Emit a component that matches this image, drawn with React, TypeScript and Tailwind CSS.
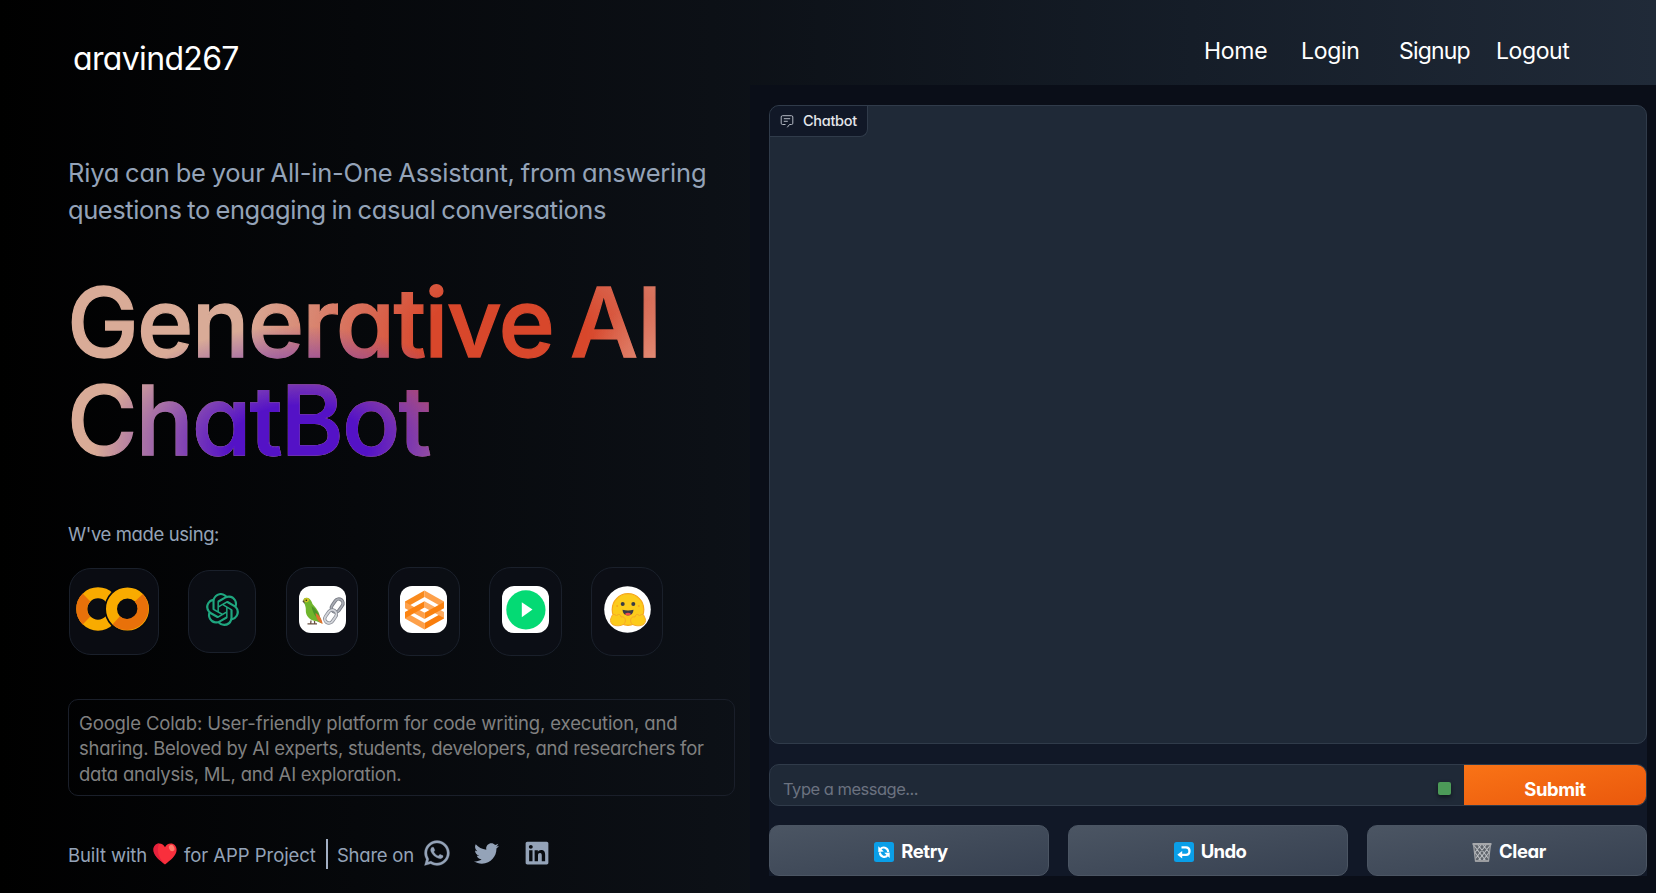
import type { ReactNode } from "react";
import { FaLinkedin, FaTwitter } from "react-icons/fa";
import { RiWhatsappLine } from "react-icons/ri";
import { SiOpenai } from "react-icons/si";

function ColabLogo() {
  return (
    <svg viewBox="0 0 73 44" className="mr-[3px] h-[44px] w-[73px]" fill="none">
      <circle cx="22" cy="22" r="16.2" stroke="#f9ab00" strokeWidth="11" />
      <path d="M10.500 10.500A16.200 16.200 0 0 0 10.500 33.500" stroke="#e8710a" strokeWidth="11" />
      <circle cx="51.5" cy="22" r="23.200" fill="#080a0f" />
      <circle cx="51.5" cy="22" r="16" stroke="#f9ab00" strokeWidth="11" />
      <path d="M62.8 10.7A16 16 0 0 1 40.2 33.3" stroke="#e8710a" strokeWidth="11" />
    </svg>
  );
}

function LangChainLogo() {
  return (
    <svg viewBox="0 0 47 47" className="h-[47px] w-[47px]">
      <rect width="47" height="47" rx="12" fill="#fff" />
      <path d="M4.500 15C4 12.500 6 11.500 8 11.800C11 12.200 12.500 15 13.500 18C17 22 20.500 26 21 31L23 37.500L17 35C11 34.500 6.500 30 6.800 24C7 21 6 19 4.500 15Z" fill="#6fb52c" />
      <path d="M4.200 15.500C4.500 12 8 10.800 10.500 13.500C9.500 16.500 7 17 4.200 15.500Z" fill="#c9c321" />
      <path d="M3.300 15L5.300 14.300L5.600 18Z" fill="#51453a" />
      <path d="M12.500 20C17 23 20.500 28 21.500 34C17 32 13.500 27 12.500 20Z" fill="#4c9428" />
      <path d="M16.500 27C20 29 22.500 32 23.800 38C20 36.500 17 33 16.500 27Z" fill="#e0702f" />
      <path d="M12 34.500L11.700 37.800M15.500 35L15.700 37.800M8.500 37.800H18" stroke="#6b5142" strokeWidth="1.300" fill="none" />
      <circle cx="7.300" cy="14.300" r=".8" fill="#222" />
      <g fill="none">
        <rect x="-4.200" y="-7" width="8.400" height="14" rx="4.200" transform="translate(38.200 19.500) rotate(35)" stroke="#777b84" strokeWidth="3.400" />
        <rect x="-4.200" y="-7" width="8.400" height="14" rx="4.200" transform="translate(38.200 19.500) rotate(35)" stroke="#a9acb4" strokeWidth="1.700" />
        <rect x="-4.200" y="-7" width="8.400" height="14" rx="4.200" transform="translate(31.600 30.500) rotate(35)" stroke="#858993" strokeWidth="3.400" />
        <rect x="-4.200" y="-7" width="8.400" height="14" rx="4.200" transform="translate(31.600 30.500) rotate(35)" stroke="#d3d5da" strokeWidth="1.900" />
      </g>
    </svg>
  );
}

function WeightedLayersLogo() {
  return (
    <svg viewBox="0 0 47 47" className="mr-px h-[47px] w-[47px]">
      <rect width="47" height="47" rx="12" fill="#fff" />
      <path d="M5 15.500L24.500 4.500V11L5 22Z" fill="#f98a1d" />
      <path d="M24.500 4.500L44 15.500V22L24.500 11Z" fill="#fda04a" />
      <path d="M5 26L24.500 37V43.500L5 32.500Z" fill="#fda04a" />
      <path d="M24.500 37L44 26V32.500L24.500 43.500Z" fill="#f97d0b" />
      <path d="M5 16L24.500 26.800V33L5 22.200Z" fill="#fda04a" />
      <path d="M24.500 15.200L44 26V32L24.500 21.400Z" fill="#fdab60" />
      <path d="M5 26L24.500 15.200V21.400L5 32.200Z" fill="#fb8312" />
      <path d="M24.500 26.800L44 16V22.200L24.500 33Z" fill="#f9810f" />
    </svg>
  );
}

function PlayLogo() {
  return (
    <svg viewBox="0 0 47 47" className="mr-px h-[47px] w-[47px]">
      <rect width="47" height="47" rx="12" fill="#fff" />
      <circle cx="23.900" cy="23.800" r="19.600" fill="#04da74" />
      <path d="M19.800 16.200L30.500 23.600L19.800 31.200Z" fill="#fff" />
    </svg>
  );
}

function HuggingFaceLogo() {
  return (
    <svg viewBox="0 0 47 47" className="h-[47px] w-[47px]">
      <circle cx="23.500" cy="23.500" r="23.300" fill="#fff" />
      <circle cx="24" cy="23.500" r="15.800" fill="#fccb1c" stroke="#f7a81b" strokeWidth="1.200" />
      <path d="M7.500 31C8.500 27 11.500 28.500 12.500 30C14 27.500 16.500 28 17 31C21 30 22.500 34 20.500 37.500C18 40.500 10 40.500 8 38C6 36 6 33 7.500 31Z" fill="#fccb1c" stroke="#f4a52a" strokeWidth=".9" />
      <path d="M40.500 31C39.500 27 36.500 28.500 35.500 30C34 27.500 31.500 28 31 31C27 30 25.500 34 27.500 37.500C30 40.500 38 40.500 40 38C42 36 42 33 40.500 31Z" fill="#fccb1c" stroke="#f4a52a" strokeWidth=".9" />
      <circle cx="18.700" cy="18" r="2" fill="#3a3b45" />
      <circle cx="29.300" cy="18" r="2" fill="#3a3b45" />
      <circle cx="13.200" cy="20" r="1" fill="#f7a81b" />
      <circle cx="34.800" cy="20" r="1" fill="#f7a81b" />
      <path d="M18.500 23.800Q24 25.300 29.500 23.800Q29.200 29.500 24 29.500Q18.800 29.500 18.500 23.800Z" fill="#3a3b45" />
      <path d="M20.800 28Q24 25.500 27.200 28Q26 29.500 24 29.500Q22 29.500 20.800 28Z" fill="#ef4e4e" />
    </svg>
  );
}

function Heart() {
  return (
    <svg viewBox="0 0 24 22" className="h-[22px] w-[24px]">
      <path d="M12 21.500C7 17.500.4 13 .4 6.800C.4 3 3 .5 6.200.5C8.800.5 11 2 12 4.300C13 2 15.200.5 17.800.5C21 .5 23.600 3 23.600 6.800C23.600 13 17 17.500 12 21.500Z" fill="#f92f3c" />
      <path d="M6.200.5C3 .5.4 3 .4 6.800C.4 13 7 17.500 12 21.500C6 15 3 9 6.200.5Z" fill="#d9183c" opacity=".6" />
      <ellipse cx="18.700" cy="5" rx="2.600" ry="3.400" fill="#ff7b6c" transform="rotate(-25 18.700 5)" />
    </svg>
  );
}

function RetryIcon() {
  return (
    <svg viewBox="0 0 20 20" className="h-5 w-5">
      <rect width="20" height="20" rx="2.500" fill="#0a9fe8" />
      <g fill="none" stroke="#fff" strokeWidth="2.100">
        <path d="M6.500 7C8.500 4.600 13.800 5 14.200 10" />
        <path d="M13.500 13.400C11.500 15.800 6.200 15.400 5.800 10.400" />
      </g>
      <path d="M4.300 4.300V10L9.800 9.600Z M15.700 16V10.400L10.200 10.800Z" fill="#fff" />
    </svg>
  );
}

function UndoIcon() {
  return (
    <svg viewBox="0 0 20 20" className="h-5 w-5">
      <rect width="20" height="20" rx="2.500" fill="#0a9fe8" />
      <path d="M7.500 5.300H12Q15.500 5.300 15.500 9Q15.500 12.800 12 12.800H7" fill="none" stroke="#fff" strokeWidth="2.300" />
      <path d="M3.300 12.800L8.200 9V16.600Z" fill="#fff" />
    </svg>
  );
}

function TrashIcon() {
  return (
    <svg viewBox="0 0 20 20" className="h-5 w-5">
      <path d="M1.500 2H18.500L16.500 19.500H3.500Z" fill="#5f646b" />
      <path d="M2 3.500L14 19M6 3L16.500 16.500M11 3L17.500 11M3 10.500L9.500 19M18 3.500L6 19M14 3L3.500 16.500M9 3L2.500 11M17 10.500L10.500 19" stroke="#b9bcc0" strokeWidth="1.100" fill="none" />
      <path d="M.5 1H19.500V3.200H.5Z" fill="#a6a8ab" />
      <path d="M3.300 18H16.700V20H3.300Z" fill="#9b9da1" />
      <path d="M1.500 2L3.500 19.500M18.500 2L16.500 19.500" stroke="#a6a8ab" strokeWidth="1.200" />
    </svg>
  );
}

function ChatIcon() {
  return (
    <svg viewBox="0 0 14 14" className="h-[14px] w-[14px]" fill="none" stroke="#b3b8c2" strokeWidth="1">
      <path d="M5.500 10.500H2.500Q1.200 10.500 1.200 9.200V3Q1.200 1.700 2.500 1.700H11.500Q12.800 1.700 12.800 3V9.200Q12.800 10.500 11.500 10.500H9.500L7.300 13.300" />
      <path d="M3.800 4.700H10.200M3.800 7.300H7.800" />
    </svg>
  );
}

function Tile({ size, children }: { size: string; children: ReactNode }) {
  return (
    <div className={`flex shrink-0 items-center justify-center rounded-[22px] border border-[#1a202b] bg-[#0c0f17]/80 pb-[5px] ${size}`}>
      {children}
    </div>
  );
}

function ActionButton({ icon, label }: { icon: ReactNode; label: ReactNode }) {
  return (
    <button className="flex h-[51px] flex-1 items-center justify-center gap-[7px] rounded-[10px] border border-[#4b5563] bg-linear-to-br from-[#4b5563] to-[#374151] pt-[2px] pl-[4px] text-[18.5px] font-bold text-white">
      {icon}
      {label}
    </button>
  );
}

export default function App() {
  return (
    <div className="flex h-[893px] w-[1656px] overflow-hidden bg-[linear-gradient(90deg,#000000_0%,#0c1016_43%,#151d28_72%,#202a38_100%)] font-['Inter',sans-serif] whitespace-nowrap [font-feature-settings:'cv11']">
      <main className="flex w-[750px] shrink-0 flex-col pl-[68px] text-[#94a3b8]">
        <div className="mt-[39px] pl-[5px] text-[32px] leading-10 tracking-[-0.66px] text-white">aravind267</div>

        <div className="mt-[75px] text-[25.5px] leading-[37px]">
          <div className="tracking-[-0.22px] [word-spacing:-1px]">Riya can be your All-in-One Assistant, from answering</div>
          <div className="tracking-[-0.43px] [word-spacing:-1px]">questions to engaging in casual conversations</div>
        </div>

        <h1 className="mt-[46px] -ml-px w-[600px] bg-[radial-gradient(ellipse_205px_120px_at_232px_172px,#5412c6_0%,#5412c6_34%,rgba(110,44,185,0.75)_60%,rgba(190,120,180,0)_100%),radial-gradient(circle_at_592px_98px,#e29c86_0px,rgba(226,140,118,0.8)_20px,rgba(216,100,80,0)_75px),radial-gradient(ellipse_265px_165px_at_440px_62px,#d8472b_0%,#d8472b_30%,rgba(216,90,68,0.8)_55%,rgba(216,130,110,0)_100%)] bg-[#d9ab97] bg-clip-text text-[96px] leading-[97.6px] font-medium text-transparent [-webkit-text-stroke:1.3px_transparent]">
          <div className="tracking-[-1.75px] [word-spacing:-6.8px]">Generative AI</div>
          <div className="tracking-[-1.6px]">ChatBot</div>
        </h1>

        <div className="mt-[53px] text-[18.5px] leading-6 tracking-[-0.4px]">W've made using:</div>

        <div className="mt-[21px] flex h-[89px] items-center pl-px">
          <Tile size="mr-[29px] h-[87px] w-[90px]"><ColabLogo /></Tile>
          <Tile size="mr-[30px] h-[83px] w-[68px]"><SiOpenai className="h-[33px] w-[33px] text-[#1fa67f]" /></Tile>
          <Tile size="mr-[30px] h-[89px] w-[72px]"><LangChainLogo /></Tile>
          <Tile size="mr-[29px] h-[89px] w-[72px]"><WeightedLayersLogo /></Tile>
          <Tile size="mr-[29px] h-[89px] w-[73px]"><PlayLogo /></Tile>
          <Tile size="h-[89px] w-[72px]"><HuggingFaceLogo /></Tile>
        </div>

        <div className="mt-[43px] h-[97px] w-[667px] rounded-[10px] border border-[#1a1f2a] pt-[11px] pl-[10px] text-[18.5px] leading-[25.2px] text-[#808080]">
          <div className="tracking-[-0.13px]">Google Colab: User-friendly platform for code writing, execution, and</div>
          <div className="tracking-[-0.27px]">sharing. Beloved by AI experts, students, developers, and researchers for</div>
          <div className="tracking-[-0.22px]">data analysis, ML, and AI exploration.</div>
        </div>

        <div className="mt-[43px] flex h-[30px] items-center text-[18.5px] leading-6">
          <span className="w-[85px] pt-px tracking-[-0.1px]">Built with</span>
          <Heart />
          <span className="ml-[7px] w-[142px] pt-px tracking-[-0.05px]">for APP Project</span>
          <span className="mr-[9px] h-[30px] w-[2px] bg-[#a3b0c4]" />
          <span className="w-[85px] pt-px tracking-[-0.25px]">Share on</span>
          <RiWhatsappLine className="-mt-[2px] h-[30px] w-[30px] stroke-current stroke-[0.2]" />
          <FaTwitter className="-mt-px ml-[22px] h-[25px] w-[25px]" />
          <FaLinkedin className="-mt-[2px] ml-[25px] h-[26px] w-[26px]" />
        </div>
      </main>

      <div className="flex min-w-0 flex-1 flex-col">
        <nav className="grid h-[85px] shrink-0 grid-cols-[97px_98px_97px_100px] pt-[35px] pl-[454px] text-[23px] leading-8 text-white">
          <span className="tracking-[-0.3px]">Home</span>
          <span className="tracking-[-0.3px]">Login</span>
          <span className="tracking-[-0.8px]">Signup</span>
          <span className="tracking-[-0.4px]">Logout</span>
        </nav>

        <section className="flex-1 bg-[#0a0e18] pt-[20px] pl-[19px]">
          <div className="flex h-[771px] w-[878px] flex-col bg-[linear-gradient(180deg,#0a0e18_0px,#0a0e18_20px,#111827_20px)]">
            <div className="h-[639px] overflow-hidden rounded-[10px] border border-[#303b4a] bg-[#1f2937]">
              <div className="flex h-[31px] w-[98px] items-center gap-[9px] rounded-br-lg border-r border-b border-[#303b4a] bg-[#111827] pl-[10px] text-[14.5px] font-medium tracking-[-0.3px] text-[#e5e7eb]">
                <ChatIcon />
                Chatbot
              </div>
            </div>

            <div className="mt-[20px] flex h-[42px] overflow-hidden rounded-[10px] border border-[#303b4a] bg-[#1f2937]">
              <div className="flex flex-1 items-center justify-between pt-[7px] pr-[13px] pl-[13px]">
                <span className="text-[16.5px] leading-6 tracking-[-0.5px] text-[#6b7280]">Type a message...</span>
                <span className="h-[13px] w-[13px] rounded-[2px] bg-[#4c9a58] shadow-[0_2px_4px_rgba(0,0,0,0.5)]" />
              </div>
              <button className="w-[182px] bg-linear-to-br from-[#f97316] to-[#ea580c] pt-[8px] text-[18.5px] leading-6 font-bold tracking-[-0.45px] text-white">
                Submit
              </button>
            </div>

            <div className="mt-[19px] flex gap-[19px]">
              <ActionButton icon={<RetryIcon />} label={<span className="tracking-[-0.4px]">Retry</span>} />
              <ActionButton icon={<UndoIcon />} label={<span className="tracking-[-0.6px]">Undo</span>} />
              <ActionButton icon={<TrashIcon />} label={<span className="tracking-[-0.4px]">Clear</span>} />
            </div>
          </div>
        </section>
      </div>
    </div>
  );
}
